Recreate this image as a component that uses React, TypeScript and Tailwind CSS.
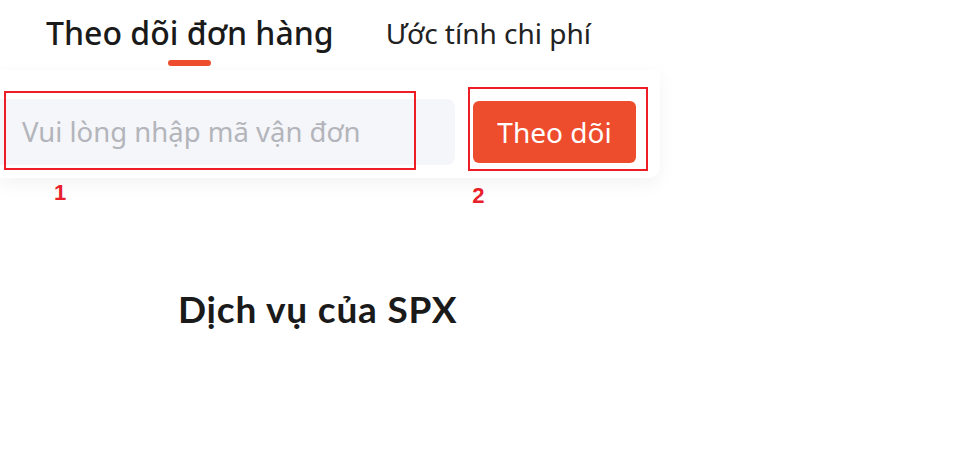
export default function App() {
  return (
    <div className="h-[475px] w-[960px] overflow-hidden bg-white font-['Noto_Sans',sans-serif]">
      {/* tabs */}
      <div className="flex items-start gap-[52px] pl-[46px] pt-[12px]">
        <div className="flex flex-col items-center">
          <span className="text-[32px] font-medium leading-[42px] text-[#1a1a1a]">
            Theo dõi đơn hàng
          </span>
          <span className="mt-[6px] h-[6px] w-[43px] rounded-full bg-[#ee4d2d]" />
        </div>
        <span className="text-[28px] leading-[42px] text-[#222]">Ước tính chi phí</span>
      </div>

      {/* search card */}
      <div className="mt-[4px] flex h-[108px] w-[660px] items-start gap-[18px] rounded-br-xl bg-white pr-[23px] pt-[29px] shadow-[0_6px_18px_rgba(0,0,0,0.05)]">
        <div className="relative flex h-[66px] w-[455px] items-center rounded-r-lg bg-[#f5f6fa] pl-[22px]">
          <span className="text-[27.5px] text-[#b3b5ba]">Vui lòng nhập mã vận đơn</span>
          <div className="absolute left-[4px] top-[-8px] h-[79px] w-[412px] border-2 border-[#ee1c25]" />
        </div>
        <div className="relative mt-[2px]">
          <button className="flex h-[62px] w-[163px] items-center justify-center rounded-md bg-[#ee4d2d] text-[28px] text-white">
            Theo dõi
          </button>
          <div className="absolute left-[-5px] top-[-14px] h-[84px] w-[180px] border-2 border-[#ee1c25]" />
        </div>
      </div>

      {/* annotation numbers */}
      <div className="flex font-['Liberation_Sans',sans-serif] text-[22px] font-bold leading-none text-[#e8202a]">
        <span className="ml-[54px] mt-[4px]">1</span>
        <span className="ml-[406px] mt-[7px]">2</span>
      </div>

      <h2 className="mt-[83px] pl-[178px] font-['Lato',sans-serif] text-[37px] font-bold leading-none tracking-[0.8px] text-[#1a1a1a]">
        Dịch vụ của SPX
      </h2>
    </div>
  );
}
